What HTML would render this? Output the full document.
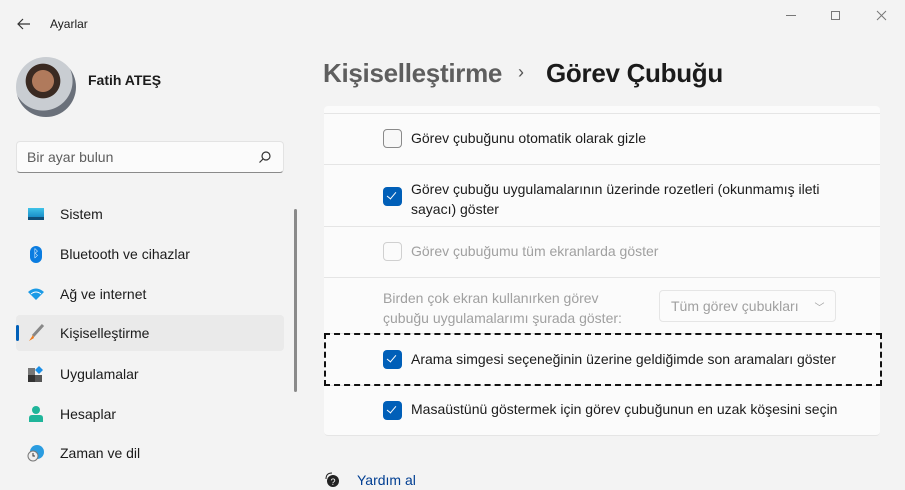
<!DOCTYPE html>
<html><head><meta charset="utf-8"><style>
*{box-sizing:border-box;margin:0;padding:0}
body{width:905px;height:490px;background:#f3f3f3;font-family:"Liberation Sans","DejaVu Sans",sans-serif;font-size:14px;color:#1b1b1b;position:relative;overflow:hidden}
.a{position:absolute}
.nav{position:absolute;left:16px;width:268px;height:36px;display:flex;align-items:center}
.nav .ic{width:18px;height:20px;margin-left:11px;margin-right:15px;display:flex;align-items:center;justify-content:center}
.nav span{font-size:14px}
.row{position:absolute;left:324px;width:556px;background:#fbfbfb;border-bottom:1px solid #e5e5e5}
.cb{position:absolute;left:59px;width:19px;height:19px;border-radius:4px}
.cb.on{background:#005fb8}
.cb.on::after{content:"";position:absolute;left:6px;top:3px;width:4px;height:8px;border:solid #fff;border-width:0 1.3px 1.3px 0;transform:rotate(40deg)}
.cb.off{border:1px solid #8a8a8a;background:#f8f8f8}
.cb.dis{border:1px solid #d0d0d0;background:#fbfbfb}
.lbl{position:absolute;left:87px;font-size:14px;line-height:20px}
</style></head><body>
<svg class="a" style="left:16px;top:16px" width="16" height="16" viewBox="0 0 16 16"><path d="M14 8H2M7 3L2 8l5 5" stroke="#333" stroke-width="1.2" fill="none"/></svg>
<div class="a" style="left:50px;top:17px;font-size:12px">Ayarlar</div>
<div class="a" style="left:786px;top:15px;width:10px;border-top:1px solid #777"></div>
<div class="a" style="left:831px;top:11px;width:9px;height:9px;border:1px solid #777"></div>
<svg class="a" style="left:876px;top:10px" width="11" height="11"><path d="M1 1L10 10M10 1L1 10" stroke="#777" stroke-width="1"/></svg>
<div class="a" style="left:16px;top:57px;width:60px;height:60px;border-radius:50%;background:radial-gradient(circle at 45% 40%,#b07a5c 0 22%,#3a2a22 23% 35%,#c9cdd2 36% 60%,#6a707a 61%)"></div>
<div class="a" style="left:88px;top:72px;font-size:14px;font-weight:bold">Fatih ATEŞ</div>
<div class="a" style="left:16px;top:141px;width:268px;height:32px;background:#fbfbfb;border:1px solid #e3e3e3;border-bottom:1px solid #8a8a8a;border-radius:4px"></div>
<div class="a" style="left:27px;top:149px;font-size:14px;color:#5d5d5d">Bir ayar bulun</div>
<svg class="a" style="left:258px;top:150px" width="14" height="14"><circle cx="8" cy="6" r="4" stroke="#333" fill="none" stroke-width="1.2"/><path d="M5 9L1.5 12.5" stroke="#333" stroke-width="1.2"/></svg>
<div class="a" style="left:294px;top:209px;width:3px;height:183px;background:#8a8a8a;border-radius:2px"></div>

<div class="nav" style="top:196px"><div class="ic"><div style="width:16px;height:12px;background:linear-gradient(#3fc3e8,#1a8ec8);border-bottom:3px solid #0f4e78"></div></div><span>Sistem</span></div>
<div class="nav" style="top:236px"><div class="ic"><div style="width:12px;height:17px;border-radius:6px;background:#0a7ce0;color:#fff;font-size:11px;text-align:center;line-height:17px">ᛒ</div></div><span>Bluetooth ve cihazlar</span></div>
<div class="nav" style="top:276px"><div class="ic"><svg width="18" height="14"><path d="M1 5Q9-2 17 5L9 13Z" fill="#1a9ae6"/><path d="M4 7Q9 3 14 7" stroke="#fff" stroke-width="1" fill="none"/></svg></div><span>Ağ ve internet</span></div>
<div class="nav" style="top:315px;background:#eaeaea;border-radius:4px"><div class="a" style="left:0;top:10px;width:3px;height:16px;background:#005fb8;border-radius:2px"></div><div class="ic"><svg width="18" height="18"><path d="M16 1L6 12" stroke="#888" stroke-width="3"/><path d="M6 11L2 17l5-3z" fill="#f07a1a"/></svg></div><span>Kişiselleştirme</span></div>
<div class="nav" style="top:356px"><div class="ic"><svg width="16" height="16"><rect x="0" y="2" width="7" height="7" fill="#777"/><rect x="0" y="9" width="7" height="7" fill="#333"/><rect x="7" y="9" width="7" height="7" fill="#555"/><path d="M11 0l4 4-4 4-4-4z" fill="#1a8ee6"/></svg></div><span>Uygulamalar</span></div>
<div class="nav" style="top:396px"><div class="ic"><svg width="16" height="18"><circle cx="8" cy="5" r="4" fill="#1fb59a"/><path d="M1 17v-4q0-3 3-3h8q3 0 3 3v4z" fill="#1fb59a"/></svg></div><span>Hesaplar</span></div>
<div class="nav" style="top:435px"><div class="ic"><svg width="18" height="18"><circle cx="10" cy="8" r="7" fill="#2a9ce0"/><circle cx="6" cy="12" r="5" fill="#eee" stroke="#777"/><path d="M6 9v3h2" stroke="#333" fill="none"/></svg></div><span>Zaman ve dil</span></div>

<div class="a" style="left:323px;top:58px;font-size:26px;font-weight:bold;letter-spacing:-0.3px;color:#5e5e5e">Kişiselleştirme</div>
<div class="a" style="left:518px;top:62px;font-size:18px;color:#555">›</div>
<div class="a" style="left:546px;top:58px;font-size:26px;font-weight:bold;letter-spacing:-0.3px">Görev Çubuğu</div>

<div class="row" style="top:106px;height:8px;border-radius:4px 4px 0 0"></div>
<div class="row" style="top:114px;height:51px"><div class="cb off" style="top:15px"></div><div class="lbl" style="top:14px">Görev çubuğunu otomatik olarak gizle</div></div>
<div class="row" style="top:165px;height:62px"><div class="cb on" style="top:22px"></div><div class="lbl" style="top:14px">Görev çubuğu uygulamalarının üzerinde rozetleri (okunmamış ileti<br>sayacı) göster</div></div>
<div class="row" style="top:227px;height:51px"><div class="cb dis" style="top:15px"></div><div class="lbl" style="top:14px;color:#a0a0a0">Görev çubuğumu tüm ekranlarda göster</div></div>
<div class="row" style="top:278px;height:56px"><div class="lbl" style="left:59px;top:10px;color:#a0a0a0">Birden çok ekran kullanırken görev<br>çubuğu uygulamalarımı şurada göster:</div><div class="a" style="left:335px;top:12px;width:177px;height:32px;border:1px solid #e5e5e5;border-radius:4px;background:#fbfbfb;color:#a0a0a0;padding:7px 0 0 11px">Tüm görev çubukları <span style="margin-left:12px;font-size:10px">﹀</span></div></div>
<div class="row" style="top:334px;height:52px"><div class="cb on" style="top:16px"></div><div class="lbl" style="top:15px">Arama simgesi seçeneğinin üzerine geldiğimde son aramaları göster</div></div>
<div class="a" style="left:324px;top:333px;width:558px;height:53px;border:2px dashed #111"></div>
<div class="row" style="top:386px;height:50px;border-radius:0 0 4px 4px"><div class="cb on" style="top:15px"></div><div class="lbl" style="top:13px">Masaüstünü göstermek için görev çubuğunun en uzak köşesini seçin</div></div>

<svg class="a" style="left:323px;top:471px" width="18" height="18"><circle cx="10" cy="10" r="6" fill="#222"/><text x="7.5" y="14" font-size="9" fill="#fff" font-family="Liberation Sans">?</text><path d="M3 8Q3 2 9 2" stroke="#222" fill="none"/></svg>
<div class="a" style="left:357px;top:472px;font-size:14px;color:#003e92">Yardım al</div>
</body></html>
